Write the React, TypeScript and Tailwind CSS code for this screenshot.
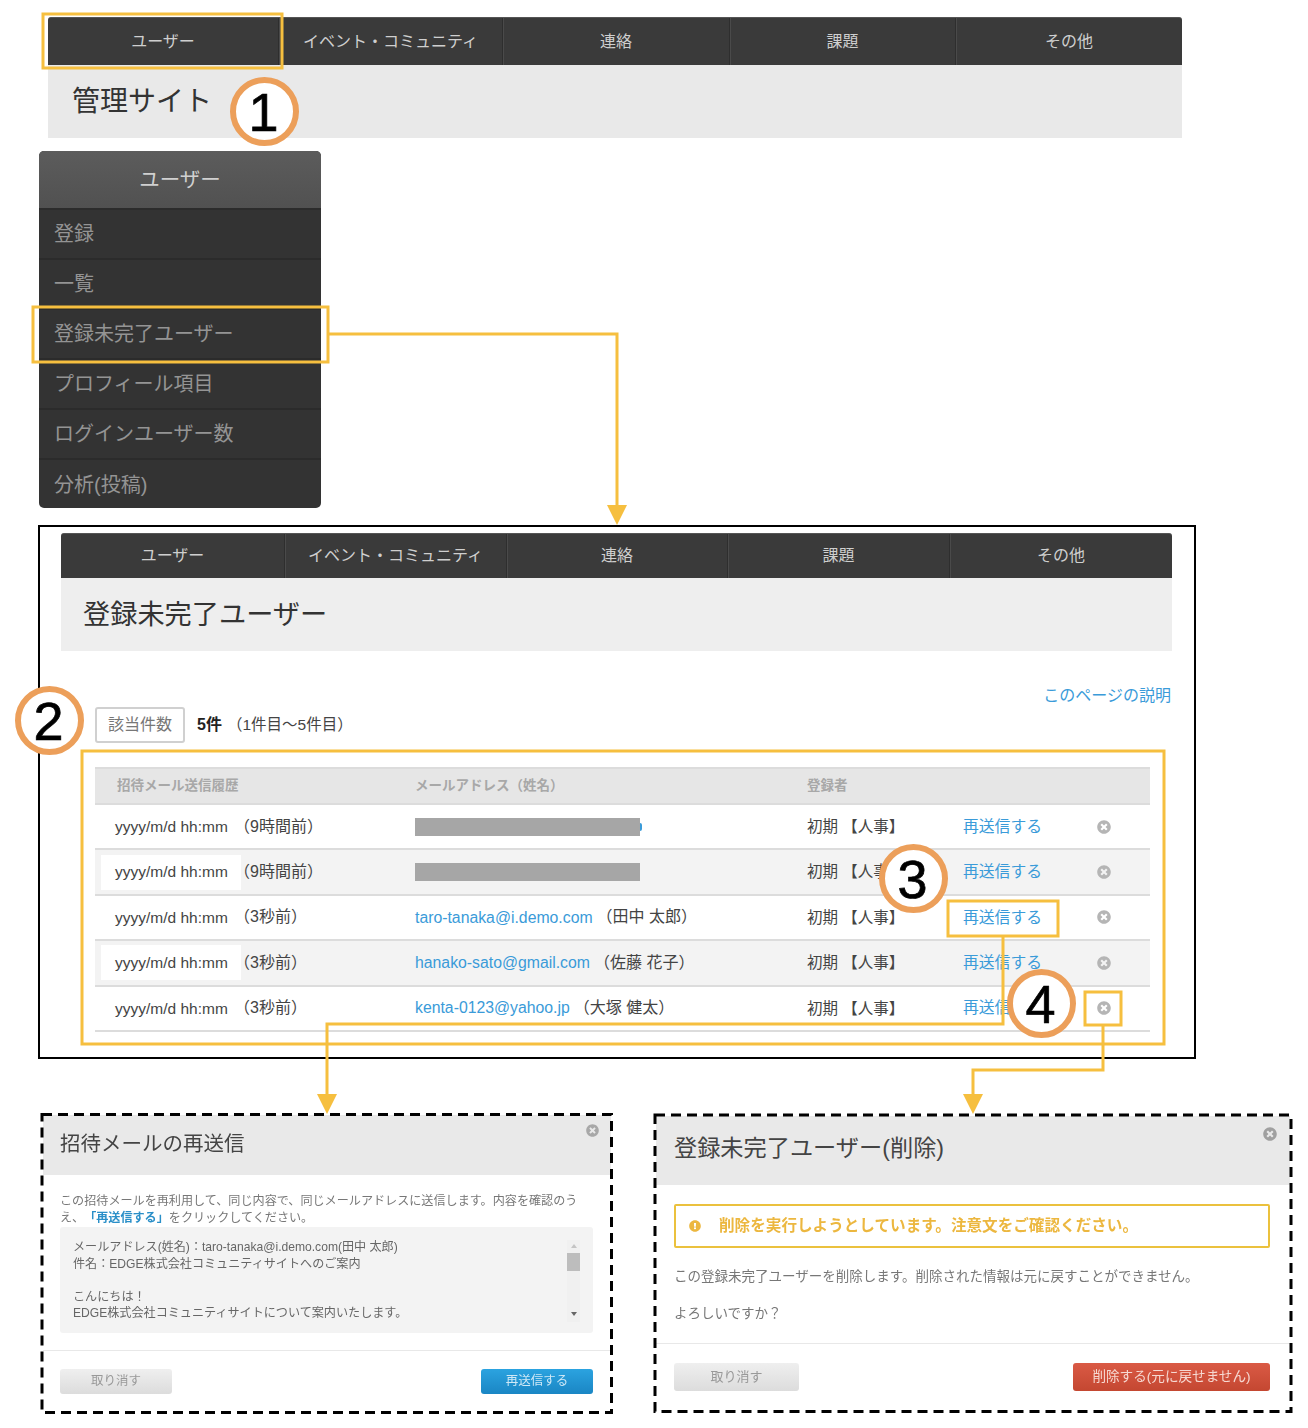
import { FaExclamationCircle, FaTimesCircle } from "react-icons/fa";

const tabs = ["ユーザー", "イベント・コミュニティ", "連絡", "課題", "その他"];
const sideItems = ["登録", "一覧", "登録未完了ユーザー", "プロフィール項目", "ログインユーザー数", "分析(投稿)"];

const rows = [
  { ago: "（9時間前）", masked: true, sliver: true },
  { ago: "（9時間前）", masked: true },
  { ago: "（3秒前）", email: "taro-tanaka@i.demo.com", name: "（田中 太郎）" },
  { ago: "（3秒前）", email: "hanako-sato@gmail.com", name: "（佐藤 花子）" },
  { ago: "（3秒前）", email: "kenta-0123@yahoo.jp", name: "（大塚 健太）" },
];

function NavBar({ widths, height }: { widths: string[]; height: string }) {
  return (
    <div className={`flex ${height} bg-[#3a3a3a] rounded-t-[3px] border-t border-[#555] text-[16px] text-[#cfcfcf]`}>
      {tabs.map((t, i) => (
        <div
          key={t}
          className={`flex items-center justify-center ${widths[i]} ${
            i < 4 ? "border-r border-[#2e2e2e] shadow-[1px_0_0_#4a4a4a]" : ""
          }`}
        >
          {t}
        </div>
      ))}
    </div>
  );
}

function Badge({ n, className }: { n: number; className: string }) {
  return (
    <div
      className={`absolute z-20 flex h-[69px] w-[69px] items-center justify-center rounded-full border-[6px] border-[#ec9f5a] bg-white pr-[2px] text-[54px] leading-none text-black [-webkit-text-stroke:0.7px_black] ${className}`}
    >
      {n}
    </div>
  );
}

function Button({ label, className }: { label: string; className: string }) {
  return <div className={`flex items-center justify-center rounded-[3px] ${className}`}>{label}</div>;
}

function DataTable() {
  return (
    <div className="ml-[34px] mt-[24px] w-[1055px] text-[15.5px] text-[#444]">
      <div className="grid h-[38px] grid-cols-[320px_392px_156px_187px] items-center border-y-2 border-[#dcdcdc] bg-[#e6e6e6] text-[13.5px] font-bold text-[#a8a8a8]">
        <div className="pl-[22px]">招待メール送信履歴</div>
        <div>メールアドレス（姓名）</div>
        <div>登録者</div>
        <div />
      </div>
      {rows.map((r, i) => (
        <div
          key={i}
          className={`grid h-[45.4px] grid-cols-[320px_392px_156px_109px_78px] items-center border-b-2 border-[#dcdcdc] ${
            i % 2 === 1 ? "bg-[#f3f3f3]" : "bg-white"
          }`}
        >
          <div className="flex items-center pl-[6px]">
            <div className={`flex h-[35px] w-[140px] items-center pl-[14px] ${i % 2 === 1 ? "bg-white" : ""}`}>
              yyyy/m/d hh:mm
            </div>
            <div className="-ml-[7px] text-[16px]">{r.ago}</div>
          </div>
          <div className="flex items-center">
            {r.masked ? (
              <div className="flex h-[18px] w-[225px] items-center justify-end bg-[#a6a6a6]">
                {r.sliver && <div className="-mr-[2px] h-[8px] w-[2px] rounded-r-full bg-[#3a9bd9]" />}
              </div>
            ) : (
              <>
                <span className="text-[15.8px] text-[#3a9bd9]">{r.email}</span>
                <span className="ml-[4px] text-[16px]">{r.name}</span>
              </>
            )}
          </div>
          <div>初期 【人事】</div>
          <div className="text-[15.8px] text-[#3a9bd9]">再送信する</div>
          <div className="pl-[25px]">
            <FaTimesCircle className="text-[14px] text-[#b5b5b5]" />
          </div>
        </div>
      ))}
    </div>
  );
}

function Annotations() {
  const c = "#f6bf3f";
  return (
    <svg className="absolute left-0 top-0 z-10 h-[1428px] w-[1308px]" viewBox="0 0 1308 1428" fill="none">
      <g stroke={c} strokeWidth="3">
        <rect x="43" y="14" width="239" height="54" />
        <rect x="33" y="307" width="295" height="55" />
        <rect x="82" y="751" width="1082" height="293" />
        <rect x="948" y="901" width="110" height="35" />
        <rect x="1085" y="992" width="36" height="33" />
        <path d="M328 334H617V506" />
        <path d="M1003 936V1024H327V1096" />
        <path d="M1103 1025V1070H973V1096" />
      </g>
      <g fill={c}>
        <polygon points="607,505 627,505 617,525" />
        <polygon points="317,1094 337,1094 327,1114" />
        <polygon points="963,1094 983,1094 973,1114" />
      </g>
      <g stroke="#000" strokeWidth="3" strokeDasharray="10 6">
        <rect x="42" y="1114.5" width="569.5" height="298" />
        <rect x="655" y="1115" width="636" height="296.5" />
      </g>
    </svg>
  );
}

function ScrollBar() {
  return (
    <div className="mt-[13px] flex h-[82px] w-[13px] flex-col items-center bg-[#f0f0f0]">
      <div className="mt-[4px] h-0 w-0 border-x-[3px] border-b-[4px] border-x-transparent border-b-[#c4c4c4]" />
      <div className="mt-[5px] h-[18px] w-[13px] bg-[#bdbdbd]" />
      <div className="mt-auto mb-[6px] h-0 w-0 border-x-[3px] border-t-[4px] border-x-transparent border-t-[#666]" />
    </div>
  );
}

export default function App() {
  return (
    <div className="relative h-[1428px] w-[1308px] overflow-hidden bg-white font-['Liberation_Sans','Noto_Sans_CJK_JP',sans-serif]">
      {/* top page */}
      <div className="absolute left-[48px] top-[17px] w-[1134px]">
        <NavBar widths={["w-[231px]", "w-[224px]", "w-[227px]", "w-[226px]", "w-[226px]"]} height="h-[48px]" />
        <div className="flex h-[73px] items-start bg-[#e9e9e9] pl-[24px] pt-[16px] text-[28px] leading-[42px] text-[#333]">
          管理サイト
        </div>
      </div>

      {/* side menu */}
      <div className="absolute left-[39px] top-[151px] h-[357px] w-[282px] overflow-hidden rounded-[5px] bg-[#333]">
        <div className="flex h-[59px] items-center justify-center border-b-2 border-[#2c2c2c] bg-gradient-to-b from-[#5c5c5c] to-[#515151] pt-[2px] text-[20.5px] text-[#d0d0d0]">
          ユーザー
        </div>
        {sideItems.map((s) => (
          <div
            key={s}
            className="flex h-[50px] items-center border-b-2 border-[#2b2b2b] pl-[15px] text-[20px] text-[#949494] last:border-b-0"
          >
            {s}
          </div>
        ))}
      </div>

      {/* list page */}
      <div className="absolute left-[38px] top-[525px] h-[534px] w-[1158px] border-2 border-black bg-white pl-[21px] pr-[22px] pt-[6px]">
        <NavBar widths={["w-[224px]", "w-[222px]", "w-[221px]", "w-[222px]", "w-[222px]"]} height="h-[45px]" />
        <div className="flex h-[73px] items-start bg-[#eeeeee] pl-[22px] pt-[16px] text-[27.2px] leading-[42px] text-[#333]">
          登録未完了ユーザー
        </div>
        <div className="mt-[32px] flex h-[24px] items-center justify-end pr-[1px] pt-[2px] text-[16px] text-[#3a9bd9]">
          このページの説明
        </div>
        <div className="ml-[34px] flex h-[36px] items-center text-[16px] text-[#444]">
          <div className="flex h-[36px] w-[90px] items-center justify-center rounded-[3px] border-2 border-[#d0d0d0] text-[#777]">
            該当件数
          </div>
          <span className="ml-[12px] font-bold text-[#222]">5件</span>
          <span className="ml-[5px] text-[15.5px]">（1件目～5件目）</span>
        </div>
        <DataTable />
      </div>

      {/* resend dialog */}
      <div className="absolute left-[43px] top-[1115px] w-[568px] text-[12.1px] text-[#777] blur-[0.4px]">
        <div className="relative flex h-[60px] items-center bg-[#e9e9e9] pb-[2px] pl-[17px] text-[20.5px] text-[#444]">
          招待メールの再送信
          <FaTimesCircle className="absolute right-[12px] top-[9px] text-[13px] text-[#a8a8a8]" />
        </div>
        <div className="pl-[17px] pr-[18px] pt-[18px] leading-[17px]">
          <p>
            この招待メールを再利用して、同じ内容で、同じメールアドレスに送信します。内容を確認のう
            <br />
            え、
            <b className="ml-[6px] text-[#2a8fc8]">「再送信する」</b>
            をクリックしてください。
          </p>
          <div className="flex h-[106px] justify-between rounded-[3px] bg-[#f3f3f3] pl-[13px] pr-[13px] pt-[12px] leading-[16.5px] text-[#666]">
            <div>
              <p>メールアドレス(姓名)：taro-tanaka@i.demo.com(田中 太郎)</p>
              <p>件名：EDGE株式会社コミュニティサイトへのご案内</p>
              <p className="mt-[16.5px]">こんにちは！</p>
              <p>EDGE株式会社コミュニティサイトについて案内いたします。</p>
            </div>
            <div className="-mt-[12px]">
              <ScrollBar />
            </div>
          </div>
        </div>
        <div className="mt-[17px] flex justify-between border-t border-[#e8e8e8] py-[18px] pl-[17px] pr-[18px]">
          <Button label="取り消す" className="h-[25px] w-[112px] bg-gradient-to-b from-[#efefef] to-[#dcdcdc] text-[12.5px] text-[#999]" />
          <Button label="再送信する" className="h-[25px] w-[112px] bg-gradient-to-b from-[#2ba3e0] to-[#1a86c4] text-[12.5px] text-[#cfe8f6]" />
        </div>
      </div>

      {/* delete dialog */}
      <div className="absolute left-[656px] top-[1116px] w-[634px] text-[13.5px] text-[#777] blur-[0.4px]">
        <div className="relative flex h-[69px] items-center bg-[#e9e9e9] pb-[4px] pl-[18px] text-[23.2px] text-[#444]">
          登録未完了ユーザー(削除)
          <FaTimesCircle className="absolute right-[13px] top-[11px] text-[14px] text-[#a0a0a0]" />
        </div>
        <div className="pl-[18px] pr-[20px]">
          <div className="mt-[19px] flex h-[44px] items-center rounded-[2px] border-2 border-[#ebc13d] pl-[13px] text-[15.6px] font-bold text-[#ecb73f]">
            <FaExclamationCircle className="mr-[18px] text-[12px]" />
            削除を実行しようとしています。注意文をご確認ください。
          </div>
          <p className="mt-[19px] leading-[20px]">この登録未完了ユーザーを削除します。削除された情報は元に戻すことができません。</p>
          <p className="mt-[17px] leading-[20px]">よろしいですか？</p>
        </div>
        <div className="mt-[19px] flex justify-between border-t border-[#e8e8e8] pl-[18px] pr-[20px] pt-[19px]">
          <Button label="取り消す" className="h-[28px] w-[125px] bg-gradient-to-b from-[#efefef] to-[#dcdcdc] text-[13px] text-[#999]" />
          <Button label="削除する(元に戻せません)" className="h-[28px] w-[197px] bg-gradient-to-b from-[#da5a45] to-[#c44731] text-[13.6px] text-[#f6d9d2]" />
        </div>
      </div>

      <Annotations />
      <Badge n={1} className="left-[230px] top-[77px]" />
      <Badge n={2} className="left-[15px] top-[686px]" />
      <Badge n={3} className="left-[879px] top-[844px]" />
      <Badge n={4} className="left-[1007px] top-[969px]" />
    </div>
  );
}
